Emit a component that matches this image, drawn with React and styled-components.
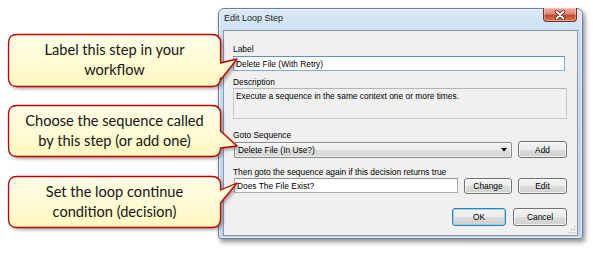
import React from 'react';
import styled, { createGlobalStyle } from 'styled-components';

const GlobalStyle = createGlobalStyle`
  html, body {
    margin: 0;
    padding: 0;
    background: #ffffff;
  }
  * {
    box-sizing: border-box;
  }
`

const Canvas = styled.div`
  position: relative;
  width: 593px;
  height: 255px;
  padding: 8px 0 0 218px;
  overflow: hidden;
`

const Window = styled.div`
  width: 365px;
  height: 231px;
  display: flex;
  flex-direction: column;
  padding: 0 4px 2px 4px;
  border: 1px solid #6c7d90;
  border-radius: 6px 6px 3px 3px;
  background: linear-gradient(180deg, #dbe9f8 0%, #c9ddf1 12%, #bcd4ec 100%);
  box-shadow: inset 0 0 0 1px rgba(255, 255, 255, 0.55), 2px 3px 5px rgba(0, 0, 0, 0.45);
`

const TitleBar = styled.div`
  height: 21px;
  display: flex;
  align-items: flex-start;
  justify-content: space-between;
`

const Title = styled.div`
  font-family: "Liberation Sans", Arial, sans-serif;
  font-size: 9px;
  line-height: 9px;
  color: #1b1b1b;
  padding: 5px 0 0 1px;
`

const CloseButton = styled.div`
  width: 34px;
  height: 14px;
  margin: -1px 1px 0 0;
  display: flex;
  align-items: center;
  justify-content: center;
  border: 1px solid #7a3326;
  border-top: none;
  border-radius: 0 0 4px 4px;
  background: linear-gradient(180deg, #eab1a2 0%, #dc8a75 45%, #c7462c 55%, #d9775b 100%);
  box-shadow: inset 0 0 0 1px rgba(255, 210, 200, 0.5);
`

const Client = styled.div`
  position: relative;
  flex: 1;
  border: 1px solid #8799ad;
  background: #f0f0f0;
  padding: 13px 10px 0 9px;
  font-family: "Liberation Sans", Arial, sans-serif;
  font-size: 8.4px;
  color: #000;
`

const FieldLabel = styled.div`
  height: 10px;
  line-height: 10px;
  margin-top: ${p => p.$top || 0}px;
  margin-bottom: ${p => (p.$gap === undefined ? 2 : p.$gap)}px;
  white-space: nowrap;
`

const TextBox = styled.div`
  height: ${p => p.$h || 15}px;
  width: ${p => p.$w ? p.$w + 'px' : 'auto'};
  flex: ${p => p.$w ? 'none' : 1};
  margin-right: ${p => p.$mr || 0}px;
  margin-left: ${p => p.$ml || 0}px;
  padding: 2px 2px 0 2px;
  line-height: 10px;
  white-space: nowrap;
  overflow: hidden;
  background: ${p => p.$readonly ? '#f0f0f0' : '#ffffff'};
  border: 1px solid ${p => p.$focus ? '#7eaad6' : p.$readonly ? '#c9c9c9' : '#abadb3'};
  border-top-color: ${p => p.$focus ? '#5c93c8' : p.$readonly ? '#b5b5b5' : '#8e9097'};
`

const Row = styled.div`
  display: flex;
  align-items: center;
  gap: 6px;
  height: 17px;
`

const Combo = styled.div`
  flex: 1;
  height: 16px;
  margin-left: 1px;
  display: flex;
  align-items: center;
  justify-content: space-between;
  padding: 0 4px 0 3px;
  border: 1px solid #8a8a8a;
  border-radius: 2px;
  background: linear-gradient(180deg, #f4f4f4 0%, #ececec 50%, #dfdfdf 51%, #d3d3d3 100%);
  box-shadow: inset 0 0 0 1px rgba(255, 255, 255, 0.6);
`

const Button = styled.div`
  width: ${p => p.$w}px;
  height: ${p => p.$h || 17}px;
  display: flex;
  align-items: center;
  justify-content: center;
  border: 1px solid ${p => p.$primary ? '#3c7fb1' : '#707070'};
  border-radius: 3px;
  background: linear-gradient(180deg, #f3f3f3 0%, #ebebeb 50%, #dddddd 51%, #cfcfcf 100%);
  box-shadow: inset 0 0 0 1px ${p => p.$primary ? 'rgba(120, 210, 250, 0.85)' : 'rgba(255, 255, 255, 0.75)'};
`

const Footer = styled.div`
  display: flex;
  justify-content: flex-end;
  gap: 7px;
  margin-top: 14px;
`

const Grip = styled.svg`
  position: absolute;
  right: 1px;
  bottom: 1px;
`

const CalloutBox = styled.div`
  position: absolute;
  left: 8px;
  top: ${p => p.$top}px;
  width: 213px;
  height: ${p => p.$h}px;
  display: flex;
  align-items: center;
  justify-content: center;
  text-align: center;
  font-family: Lato, "Open Sans", sans-serif;
  font-size: 14.6px;
  line-height: 20px;
  color: #151515;
`

const CalloutShape = styled.svg`
  position: absolute;
  left: 0;
  top: 0;
  overflow: visible;
  filter: drop-shadow(2px 2px 1.5px rgba(0, 0, 0, 0.3));
`

const CalloutText = styled.div`
  position: relative;
  padding-bottom: 1px;
`

const Callout = ({ top, h, t1, tip, t2, children }) => {
  const w = 213
  const r = 9
  const d = `M ${r} 0.5 H ${w - r} Q ${w - 0.5} 0.5 ${w - 0.5} ${r} V ${t1} L ${tip[0]} ${tip[1]} L ${w - 0.5} ${t2} V ${h - r} Q ${w - 0.5} ${h - 0.5} ${w - r} ${h - 0.5} H ${r} Q 0.5 ${h - 0.5} 0.5 ${h - r} V ${r} Q 0.5 0.5 ${r} 0.5 Z`
  const id = `fill${top}`
  return (
    <CalloutBox $top={top} $h={h}>
      <CalloutShape width={w} height={h}>
        <defs>
          <linearGradient id={id} x1="0" y1="0" x2="0" y2="1">
            <stop offset="0" stopColor="#fffee8" />
            <stop offset="1" stopColor="#fff8c0" />
          </linearGradient>
        </defs>
        <path d={d} fill={`url(#${id})`} stroke="#c00000" strokeWidth="1.3" strokeLinejoin="round" />
      </CalloutShape>
      <CalloutText>{children}</CalloutText>
    </CalloutBox>
  )
}

const App = () => {
  return (
    <Canvas>
      <GlobalStyle />
      <Window>
        <TitleBar>
          <Title>Edit Loop Step</Title>
          <CloseButton>
            <svg width="12" height="10" viewBox="0 0 12 10">
              <path d="M2.5 1.5 L9.5 8.5 M9.5 1.5 L2.5 8.5" stroke="#5a1b10" strokeWidth="3.4" strokeLinecap="round" />
              <path d="M2.5 1.5 L9.5 8.5 M9.5 1.5 L2.5 8.5" stroke="#ffffff" strokeWidth="1.8" strokeLinecap="round" />
            </svg>
          </CloseButton>
        </TitleBar>
        <Client>
          <FieldLabel>Label</FieldLabel>
          <TextBox $focus $mr={2}>Delete File (With Retry)</TextBox>

          <FieldLabel $top={6} $gap={1}>Description</FieldLabel>
          <TextBox $readonly $h={31}>Execute a sequence in the same context one or more times.</TextBox>

          <FieldLabel $top={11} $gap={1}>Goto Sequence</FieldLabel>
          <Row>
            <Combo>
              <span>Delete File (In Use?)</span>
              <svg width="6" height="4" viewBox="0 0 6 4">
                <path d="M0 0 H6 L3 3.5 Z" fill="#000" />
              </svg>
            </Combo>
            <Button $w={49}>Add</Button>
          </Row>

          <FieldLabel $top={9} $gap={0}>Then goto the sequence again if this decision returns true</FieldLabel>
          <Row>
            <TextBox $ml={1}>Does The File Exist?</TextBox>
            <Button $w={48} $h={16}>Change</Button>
            <Button $w={49} $h={16}>Edit</Button>
          </Row>

          <Footer>
            <Button $w={54} $h={18} $primary>OK</Button>
            <Button $w={54} $h={18}>Cancel</Button>
          </Footer>

          <Grip width="8" height="8" viewBox="0 0 8 8">
            <g fill="#b8b8b8">
              <rect x="6" y="0" width="1.2" height="1.2" />
              <rect x="3" y="3" width="1.2" height="1.2" />
              <rect x="6" y="3" width="1.2" height="1.2" />
              <rect x="0" y="6" width="1.2" height="1.2" />
              <rect x="3" y="6" width="1.2" height="1.2" />
              <rect x="6" y="6" width="1.2" height="1.2" />
            </g>
          </Grip>
        </Client>
      </Window>

      <Callout top={34} h={53} t1={29} tip={[229, 25]} t2={46}>
        Label this step in your<br />workflow
      </Callout>
      <Callout top={105} h={52} t1={26} tip={[229, 41]} t2={43}>
        Choose the sequence called<br />by this step (or add one)
      </Callout>
      <Callout top={176} h={52} t1={14} tip={[229, 7]} t2={27}>
        Set the loop continue<br />condition (decision)
      </Callout>
    </Canvas>
  )
}

export default App
